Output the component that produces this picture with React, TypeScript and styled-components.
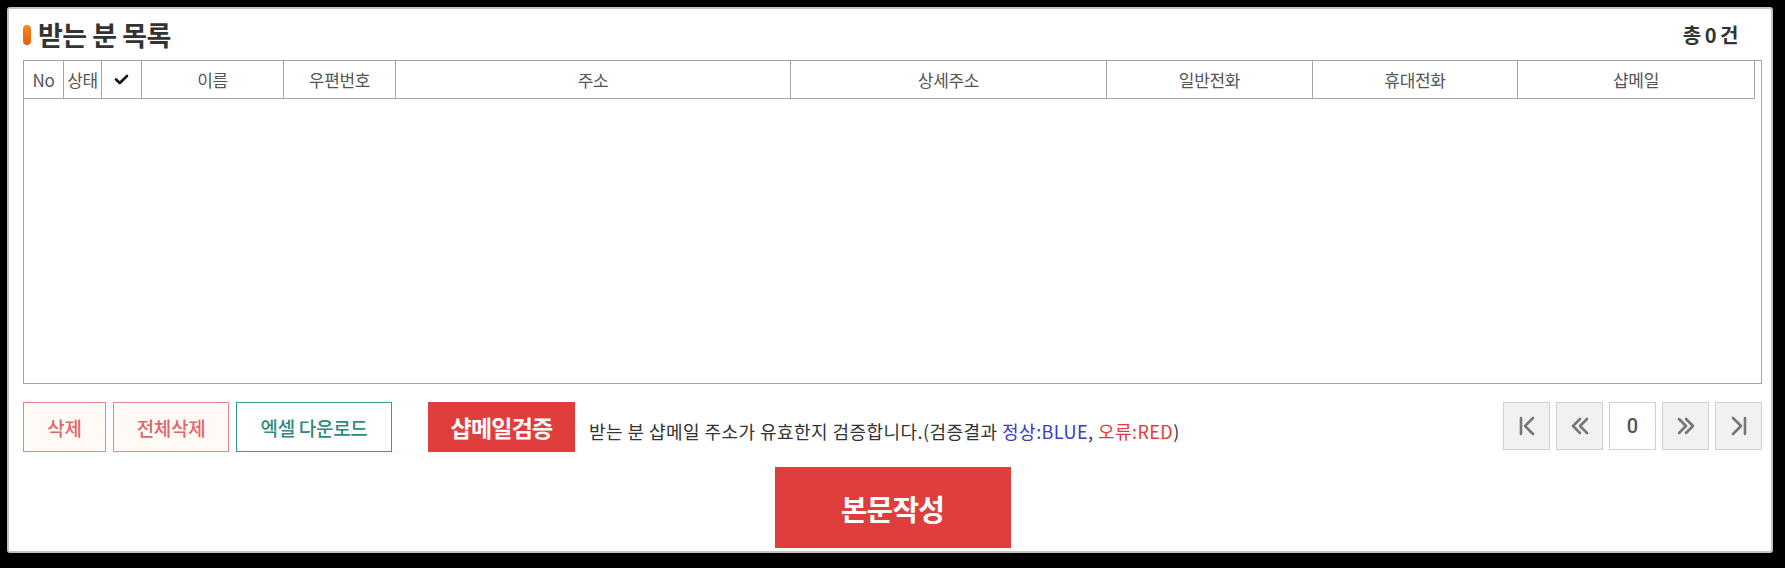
import React from "react";
import styled, { createGlobalStyle } from "styled-components";

const GlobalStyle = createGlobalStyle`
  html, body {
    margin: 0;
    padding: 0;
    background: #000;
  }
  body {
    font-family: "Noto Sans CJK KR", "Noto Sans", sans-serif;
    color: #333;
  }
`;

const Frame = styled.div`
  box-sizing: border-box;
  width: 1785px;
  height: 568px;
  padding: 7px 12px 15px 7px;
  background: #000;
`;

const Panel = styled.div`
  box-sizing: border-box;
  height: 100%;
  background: #fff;
  border: 2px solid #c4c4c4;
  border-radius: 3px;
  padding: 0 9px 0 14px;
  display: flex;
  flex-direction: column;
`;

const TitleRow = styled.div`
  height: 51px;
  display: flex;
  align-items: center;
  justify-content: space-between;
  padding-right: 24px;
`;

const Title = styled.h2`
  margin: 0;
  display: flex;
  align-items: center;
  gap: 7px;
  font-size: 27px;
  font-weight: 700;
  letter-spacing: -0.5px;
  color: #333;
  line-height: 1;
`;

const Pill = styled.span`
  width: 8px;
  height: 20px;
  border-radius: 4px;
  background: linear-gradient(180deg, #f88a26 0%, #e25e0a 100%);
`;

const Count = styled.div`
  font-size: 20px;
  font-weight: 700;
  color: #333;
  letter-spacing: -0.5px;
`;

const TableBox = styled.div`
  box-sizing: border-box;
  height: 324px;
  border: 1px solid #a4a4a4;
`;

const HeaderGrid = styled.div`
  display: grid;
  grid-template-columns: 40px 38px 40px 142px 112px 395px 316px 206px 205px 237px;
  width: 1731px;
  height: 38px;
  box-sizing: border-box;
  border-bottom: 1px solid #a4a4a4;
`;

const HeadCell = styled.div`
  box-sizing: border-box;
  border-right: 1px solid #a4a4a4;
  display: flex;
  align-items: center;
  justify-content: center;
  font-size: 17px;
  color: #555;
  letter-spacing: -0.3px;
  white-space: nowrap;
`;

const ActionRow = styled.div`
  margin-top: 18px;
  height: 50px;
  display: flex;
  align-items: flex-start;
`;

const OutlineButton = styled.button<{ $tone: "red" | "teal"; $w: number }>`
  box-sizing: border-box;
  width: ${(p) => p.$w}px;
  height: 50px;
  margin-right: 7px;
  padding: 0;
  background: ${(p) => (p.$tone === "red" ? "#fffaf6" : "#fff")};
  border: 1.5px solid ${(p) => (p.$tone === "red" ? "#e8868a" : "#3c9a8c")};
  color: ${(p) => (p.$tone === "red" ? "#e0666c" : "#2f8a7c")};
  font-family: inherit;
  font-size: 19px;
  font-weight: 500;
  letter-spacing: -0.3px;
  cursor: pointer;
`;

const SolidButton = styled.button<{ $w: number; $h: number; $size: number }>`
  box-sizing: border-box;
  width: ${(p) => p.$w}px;
  height: ${(p) => p.$h}px;
  padding: 0;
  background: #e03d3d;
  border: none;
  color: #fff;
  font-family: inherit;
  font-size: ${(p) => p.$size}px;
  font-weight: 700;
  letter-spacing: -0.8px;
  cursor: pointer;
`;

const VerifyWrap = styled.div`
  margin-left: 29px;
  display: flex;
  align-items: center;
  height: 50px;
  gap: 14px;
`;

const Note = styled.span`
  font-size: 18px;
  color: #333;
  letter-spacing: 0.45px;
  padding-top: 8px;
`;

const Tint = styled.span<{ $c: string }>`
  color: ${(p) => p.$c};
`;

const Pager = styled.div`
  margin-left: auto;
  display: flex;
  gap: 6px;
`;

const PageBtn = styled.button<{ $current?: boolean }>`
  box-sizing: border-box;
  width: 47px;
  height: 48px;
  padding: 0;
  background: ${(p) => (p.$current ? "#fff" : "#f1f1f1")};
  border: 1.5px solid #d0d0d0;
  color: #555;
  font-family: Roboto, "Noto Sans", sans-serif;
  font-size: 20px;
  font-weight: 500;
  display: flex;
  align-items: center;
  justify-content: center;
  cursor: pointer;
`;

const SubmitRow = styled.div`
  margin-top: 15px;
  display: flex;
  justify-content: center;
`;

const Icon = ({ d }: { d: string }) => (
  <svg width="24" height="24" viewBox="0 0 24 24" fill="none" stroke="#777" strokeWidth="2.6" strokeLinecap="round" strokeLinejoin="round">
    <path d={d} />
  </svg>
);

const Check = () => (
  <svg width="15" height="11" viewBox="0 0 15 11" fill="none" stroke="#111" strokeWidth="2.6" strokeLinecap="round" strokeLinejoin="round">
    <path d="M2 5.5 L5.8 9 L13 2" />
  </svg>
);

const headers = ["No", "상태", "check", "이름", "우편번호", "주소", "상세주소", "일반전화", "휴대전화", "샵메일"];

export default function App() {
  return (
    <>
      <GlobalStyle />
      <Frame>
        <Panel>
          <TitleRow>
            <Title>
              <Pill />
              받는 분 목록
            </Title>
            <Count>총 0 건</Count>
          </TitleRow>

          <TableBox>
            <HeaderGrid>
              {headers.map((h) => (
                <HeadCell key={h}>{h === "check" ? <Check /> : h}</HeadCell>
              ))}
            </HeaderGrid>
          </TableBox>

          <ActionRow>
            <OutlineButton $tone="red" $w={83}>삭제</OutlineButton>
            <OutlineButton $tone="red" $w={116}>전체삭제</OutlineButton>
            <OutlineButton $tone="teal" $w={156}>엑셀 다운로드</OutlineButton>
            <VerifyWrap>
              <SolidButton $w={147} $h={50} $size={23}>샵메일검증</SolidButton>
              <Note>
                받는 분 샵메일 주소가 유효한지 검증합니다.(검증결과 <Tint $c="#3b3bc4">정상:BLUE</Tint>,{" "}
                <Tint $c="#e23b3b">오류:RED</Tint>)
              </Note>
            </VerifyWrap>
            <Pager>
              <PageBtn><Icon d="M6 4 V20 M18 4 L10 12 L18 20" /></PageBtn>
              <PageBtn><Icon d="M12 5 L5 12 L12 19 M19 5 L12 12 L19 19" /></PageBtn>
              <PageBtn $current>0</PageBtn>
              <PageBtn><Icon d="M5 5 L12 12 L5 19 M12 5 L19 12 L12 19" /></PageBtn>
              <PageBtn><Icon d="M6 4 L14 12 L6 20 M18 4 V20" /></PageBtn>
            </Pager>
          </ActionRow>

          <SubmitRow>
            <SolidButton $w={236} $h={81} $size={29}>본문작성</SolidButton>
          </SubmitRow>
        </Panel>
      </Frame>
    </>
  );
}
